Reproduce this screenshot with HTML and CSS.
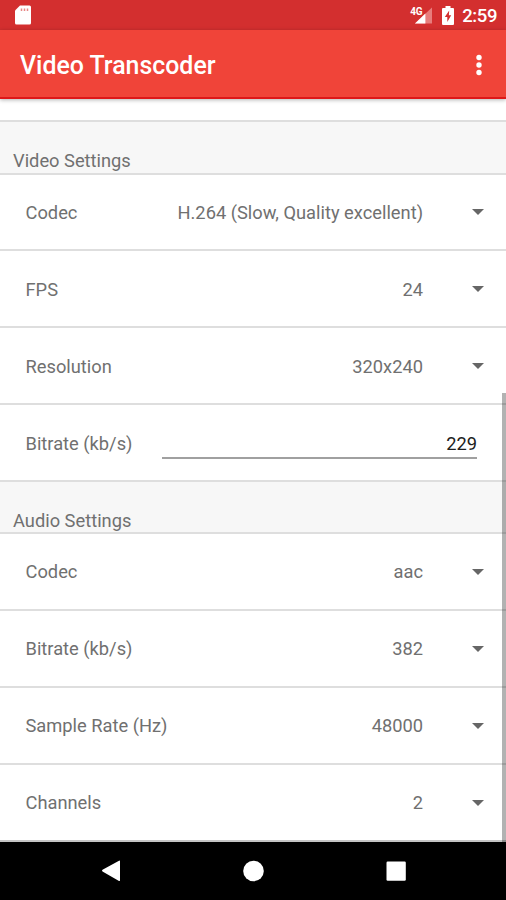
FILE: index.html
```html
<!DOCTYPE html>
<html lang="en">
<head>
<meta charset="utf-8">
<title>Video Transcoder</title>
<link rel="stylesheet" href="styles.css">
</head>
<body>
<div class="screen">
  <div class="status">
    <svg class="sd" width="18" height="20" viewBox="0 0 18 20"><path fill="#fff" d="M6 .5h9.500a1.500 1.500 0 0 1 1.500 1.500v16a1.500 1.500 0 0 1-1.500 1.500h-13A1.500 1.500 0 0 1 1 18V5.500z"/><path stroke="#e88886" stroke-width="1.500" d="M7.500 3.500v2.500M10.500 3.500v2.500M13.500 3.500v2.500"/></svg>
    <div class="indicators">
      <div class="signal"><span class="net">4G</span><svg width="18" height="17" viewBox="0 0 19 17"><path fill="#e77d7c" d="M19 0v17H1z"/><path fill="#fff" d="M12 6.500V17H1z"/></svg></div>
      <svg class="battery" width="12" height="19" viewBox="0 0 12 19"><path fill="#fff" d="M3.500 0h5v2H11a1 1 0 0 1 1 1v15a1 1 0 0 1-1 1H1a1 1 0 0 1-1-1V3a1 1 0 0 1 1-1h2.500z"/><path fill="#d32f2f" d="M7.200 4.500 2.800 11h2.500v5L9.200 9.300H6.900z"/></svg>
      <span class="clock">2:59</span>
    </div>
  </div>
  <header class="appbar">
    <h1>Video Transcoder</h1>
    <svg width="6" height="22" viewBox="0 0 6 22" fill="#fff"><circle cx="3" cy="3.500" r="2.700"/><circle cx="3" cy="11" r="2.700"/><circle cx="3" cy="18.500" r="2.700"/></svg>
  </header>
  <main class="content">
    <h2 class="section">Video Settings</h2>
    <div class="row first"><span class="label">Codec</span><span class="value">H.264 (Slow, Quality excellent)</span><i class="arrow"></i></div>
    <div class="row"><span class="label">FPS</span><span class="value">24</span><i class="arrow"></i></div>
    <div class="row"><span class="label">Resolution</span><span class="value">320x240</span><i class="arrow"></i></div>
    <div class="row"><span class="label">Bitrate (kb/s)</span><span class="field">229</span></div>
    <h2 class="section">Audio Settings</h2>
    <div class="row"><span class="label">Codec</span><span class="value">aac</span><i class="arrow"></i></div>
    <div class="row"><span class="label">Bitrate (kb/s)</span><span class="value">382</span><i class="arrow"></i></div>
    <div class="row"><span class="label">Sample Rate (Hz)</span><span class="value">48000</span><i class="arrow"></i></div>
    <div class="row"><span class="label">Channels</span><span class="value">2</span><i class="arrow"></i></div>
    <div class="end"></div>
    <div class="scrollbar"></div>
  </main>
  <nav class="navbar">
    <svg width="506" height="58" viewBox="0 0 506 58" fill="#fff"><path d="M102.500 27.800 119 18.700q1-.5 1 .6v19q0 1.200-1 .6l-16.500-9.500q-1-.8 0-1.600z"/><circle cx="253.500" cy="29" r="10.300"/><rect x="386.500" y="19.500" width="19.300" height="19.300" rx="1.200"/></svg>
  </nav>
</div>
</body>
</html>
```

FILE: styles.css
```css
* { box-sizing: border-box; }
body { margin: 0; font-family: Roboto, sans-serif; background: #fff; }
.screen { width: 506px; height: 900px; display: flex; flex-direction: column; overflow: hidden; }
.status { height: 30px; flex: none; background: #d32f2f; display: flex; justify-content: space-between; align-items: flex-start; padding: 5px 9px 0 14px; }
.indicators { display: flex; color: #fff; }
.signal { display: flex; margin-top: 2px; }
.net { font-size: 10px; font-weight: 700; line-height: 9px; letter-spacing: -.3px; margin-right: -8px; z-index: 1; }
.battery { margin: 1px 8px 0 10px; }
.clock { font-size: 18.500px; font-weight: 500; line-height: 22px; letter-spacing: -.4px; }
.appbar { height: 69px; flex: none; background: #f04439; border-bottom: 2px solid #de1719; box-shadow: 0 1px 4px rgba(0,0,0,.3); display: flex; align-items: center; justify-content: space-between; padding: 2px 24px 0 20px; z-index: 1; }
h1 { margin: 2px 0 0; color: #fff; font-size: 24.900px; font-weight: 500; line-height: 30px; }
.content { flex: 1; position: relative; padding-top: 21px; color: #707070; font-size: 18.300px; line-height: 22px; }
.section { height: 53px; margin: 0; padding: 28px 13px 0; border-top: 2px solid #dedede; background: #f7f7f7; font: inherit; }
.row { height: 77px; display: flex; align-items: center; padding: 0 22.500px 0 25.500px; border-top: 2px solid #dedede; }
.row.first { height: 76px; }
.section ~ .section { height: 52px; }
.label, .value { padding-top: 2px; }
.section ~ .section ~ .row .label, .section ~ .section ~ .row .value { padding-top: 0; }
.value { margin-left: auto; margin-right: 48.500px; }
.arrow { border: 6px solid transparent; border-top-color: #666; border-bottom: 0; }
.field { margin-left: auto; margin-right: 6.500px; width: 315px; height: 34px; margin-top: -2px; padding-top: 8px; border-bottom: 2px solid #a0a0a0; text-align: right; color: #202020; }
.end { height: 2px; background: #c4c4c4; }
.scrollbar { position: absolute; right: 0; top: 294px; bottom: 0; width: 4px; background: rgba(0,0,0,.3); }
.navbar { height: 58px; flex: none; background: #000; }
.navbar svg { display: block; }
```
